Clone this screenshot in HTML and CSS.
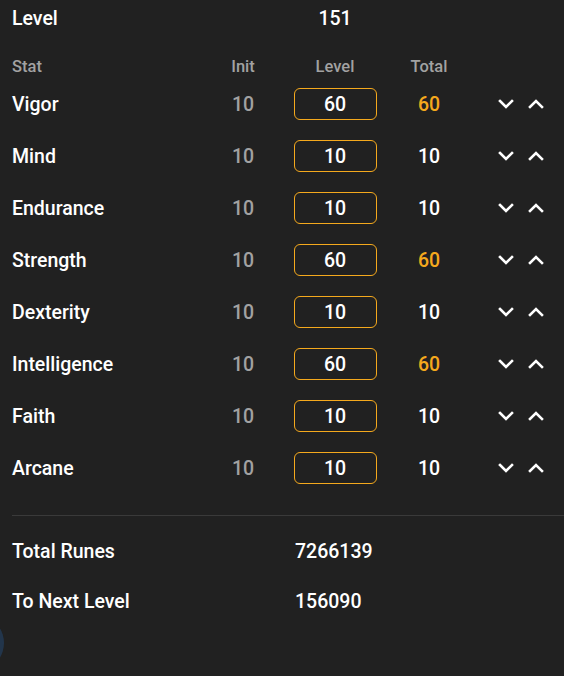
FILE: index.html
```html
<!DOCTYPE html>
<html>
<head>
<meta charset="utf-8">
<link rel="stylesheet" href="styles.css">
</head>
<body>
<div class="page">
  <div class="top">
    <div class="top-label">Level</div>
    <div class="top-value">151</div>
  </div>
  <div class="grid head">
    <div class="c-name">Stat</div>
    <div class="c-init">Init</div>
    <div class="c-level">Level</div>
    <div class="c-total">Total</div>
    <div></div>
  </div>
  <div class="grid row">
    <div class="c-name">Vigor</div><div class="c-init">10</div>
    <div class="c-level"><div class="box">60</div></div>
    <div class="c-total hi">60</div>
    <div class="c-arrows"><svg class="chev" viewBox="0 0 16 10"><path d="M2 2 L8 8 L14 2"/></svg><svg class="chev" viewBox="0 0 16 10"><path d="M2 8 L8 2 L14 8"/></svg></div>
  </div>
  <div class="grid row">
    <div class="c-name">Mind</div><div class="c-init">10</div>
    <div class="c-level"><div class="box">10</div></div>
    <div class="c-total">10</div>
    <div class="c-arrows"><svg class="chev" viewBox="0 0 16 10"><path d="M2 2 L8 8 L14 2"/></svg><svg class="chev" viewBox="0 0 16 10"><path d="M2 8 L8 2 L14 8"/></svg></div>
  </div>
  <div class="grid row">
    <div class="c-name">Endurance</div><div class="c-init">10</div>
    <div class="c-level"><div class="box">10</div></div>
    <div class="c-total">10</div>
    <div class="c-arrows"><svg class="chev" viewBox="0 0 16 10"><path d="M2 2 L8 8 L14 2"/></svg><svg class="chev" viewBox="0 0 16 10"><path d="M2 8 L8 2 L14 8"/></svg></div>
  </div>
  <div class="grid row">
    <div class="c-name">Strength</div><div class="c-init">10</div>
    <div class="c-level"><div class="box">60</div></div>
    <div class="c-total hi">60</div>
    <div class="c-arrows"><svg class="chev" viewBox="0 0 16 10"><path d="M2 2 L8 8 L14 2"/></svg><svg class="chev" viewBox="0 0 16 10"><path d="M2 8 L8 2 L14 8"/></svg></div>
  </div>
  <div class="grid row">
    <div class="c-name">Dexterity</div><div class="c-init">10</div>
    <div class="c-level"><div class="box">10</div></div>
    <div class="c-total">10</div>
    <div class="c-arrows"><svg class="chev" viewBox="0 0 16 10"><path d="M2 2 L8 8 L14 2"/></svg><svg class="chev" viewBox="0 0 16 10"><path d="M2 8 L8 2 L14 8"/></svg></div>
  </div>
  <div class="grid row">
    <div class="c-name">Intelligence</div><div class="c-init">10</div>
    <div class="c-level"><div class="box">60</div></div>
    <div class="c-total hi">60</div>
    <div class="c-arrows"><svg class="chev" viewBox="0 0 16 10"><path d="M2 2 L8 8 L14 2"/></svg><svg class="chev" viewBox="0 0 16 10"><path d="M2 8 L8 2 L14 8"/></svg></div>
  </div>
  <div class="grid row">
    <div class="c-name">Faith</div><div class="c-init">10</div>
    <div class="c-level"><div class="box">10</div></div>
    <div class="c-total">10</div>
    <div class="c-arrows"><svg class="chev" viewBox="0 0 16 10"><path d="M2 2 L8 8 L14 2"/></svg><svg class="chev" viewBox="0 0 16 10"><path d="M2 8 L8 2 L14 8"/></svg></div>
  </div>
  <div class="grid row">
    <div class="c-name">Arcane</div><div class="c-init">10</div>
    <div class="c-level"><div class="box">10</div></div>
    <div class="c-total">10</div>
    <div class="c-arrows"><svg class="chev" viewBox="0 0 16 10"><path d="M2 2 L8 8 L14 2"/></svg><svg class="chev" viewBox="0 0 16 10"><path d="M2 8 L8 2 L14 8"/></svg></div>
  </div>
  <div class="sep"></div>
  <div class="summary">
    <div class="sum-row"><div class="sum-label">Total Runes</div><div class="sum-value">7266139</div></div>
    <div class="sum-row"><div class="sum-label">To Next Level</div><div class="sum-value">156090</div></div>
  </div>
  <div class="fab"></div>
</div>
</body>
</html>
```
FILE: styles.css
```css
html, body {
  margin: 0;
  padding: 0;
  background: #212121;
}
body {
  font-family: Roboto, "Noto Sans", sans-serif;
  color: #ffffff;
  font-size: 19.5px;
  font-weight: 500;
  width: 564px;
  height: 676px;
  overflow: hidden;
  position: relative;
}
.page {
  padding-left: 12px;
}
.top {
  display: flex;
  align-items: center;
  height: 36px;
}
.top-label {
  width: 283px;
}
.top-value {
  width: 80px;
  text-align: center;
}
.grid {
  display: grid;
  grid-template-columns: 200px 62px 122px 66px 1fr;
  align-items: center;
}
.head {
  height: 24px;
  padding-top: 18px;
  color: #a2a2a2;
  font-size: 16.5px;
}
.row {
  height: 52px;
}
.c-init {
  text-align: center;
}
.row .c-init {
  color: #a2a2a2;
}
.c-level {
  display: flex;
  justify-content: center;
}
.c-total {
  text-align: center;
}
.hi {
  color: #f5a91d;
}
.box {
  width: 81px;
  height: 30px;
  border: 1px solid #f5a91d;
  border-radius: 6px;
  display: flex;
  align-items: center;
  justify-content: center;
  box-sizing: content-box;
}
.c-arrows {
  display: flex;
  align-items: center;
  gap: 14px;
  padding-left: 36px;
}
.chev {
  width: 16px;
  height: 10px;
  fill: none;
  stroke: #ffffff;
  stroke-width: 2.6;
  stroke-linecap: square;
}
.sep {
  height: 1px;
  background: #3a3a3a;
  margin-top: 21px;
}
.summary {
  padding-top: 10px;
}
.sum-row {
  display: flex;
  align-items: center;
  height: 50px;
}
.sum-label {
  width: 283px;
}
.fab {
  position: absolute;
  left: -32px;
  top: 620px;
  width: 36px;
  height: 46px;
  border-radius: 50%;
  background: #22354b;
}
```
